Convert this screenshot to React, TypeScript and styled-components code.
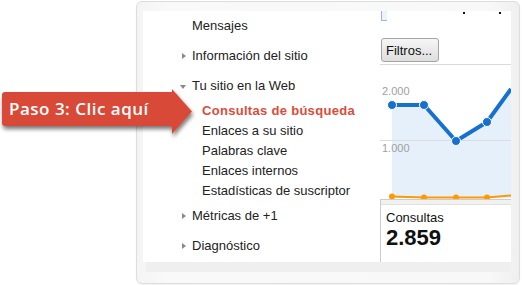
import styled, { createGlobalStyle } from "styled-components";

const GlobalStyle = createGlobalStyle`
  html, body {
    margin: 0;
    padding: 0;
    background: #fff;
  }
  body {
    font-family: "Liberation Sans", Arial, sans-serif;
  }
`;

const Page = styled.div`
  position: relative;
  width: 522px;
  height: 285px;
  overflow: hidden;
  padding-top: 1px;
  box-sizing: border-box;
`;

const Frame = styled.div`
  margin-left: 136px;
  width: 384px;
  height: 283px;
  box-sizing: border-box;
  border: 1px solid #dddddd;
  border-radius: 6px;
  background: linear-gradient(to right, #f4f4f4, #f9f9f9 8%, #f8f8f8 92%, #efefef);
  box-shadow: 0 1px 2px rgba(0, 0, 0, 0.06);
  padding: 9px 8px 0 6px;
  display: flex;
  flex-direction: column;
`;

const Inner = styled.div`
  height: 251px;
  background: #fff;
  display: grid;
  grid-template-columns: 237px 131px;
`;

const Strip = styled.div`
  height: 10px;
  margin-left: 3px;
  background: #efefef;
`;

const Nav = styled.ul`
  list-style: none;
  margin: 0;
  padding: 0 0 0 49px;
  font-size: 13px;
  color: #222;
`;

const Item = styled.li`
  position: relative;
  height: 30px;
  line-height: 30px;
  white-space: nowrap;
`;

const Arrow = styled.span<{ $open?: boolean }>`
  position: absolute;
  width: 0;
  height: 0;
  ${(p) =>
    p.$open
      ? `
    left: -12px;
    top: 14px;
    border-left: 3.5px solid transparent;
    border-right: 3.5px solid transparent;
    border-top: 4px solid #888;
  `
      : `
    left: -10px;
    top: 12px;
    border-top: 3.5px solid transparent;
    border-bottom: 3.5px solid transparent;
    border-left: 4px solid #888;
  `}
`;

const SubList = styled.ul`
  list-style: none;
  margin: 0;
  padding: 0 0 0 10px;
`;

const SubItem = styled.li<{ $active?: boolean }>`
  height: 20px;
  line-height: 20px;
  white-space: nowrap;
  color: ${(p) => (p.$active ? "#dd4b39" : "#222")};
  font-weight: ${(p) => (p.$active ? "bold" : "normal")};
  letter-spacing: ${(p) => (p.$active ? "0.3px" : "0")};
`;

const Side = styled.div`
  display: flex;
  flex-direction: column;
`;

const TopRow = styled.div`
  height: 10px;
  display: flex;
  align-items: flex-start;
`;

const SelectCorner = styled.div`
  width: 5px;
  height: 9px;
  margin-left: 1px;
  border-left: 1px solid #9fb2dc;
  border-bottom: 1px solid #9fb2dc;
  background: #eef2fb;
`;

const Dot = styled.div<{ $gap: number }>`
  width: 2px;
  height: 2px;
  margin-top: 1px;
  margin-left: ${(p) => p.$gap}px;
  background: #111;
`;

const ButtonRow = styled.div`
  height: 44px;
  box-sizing: border-box;
  padding: 17px 0 0 1px;
  border-bottom: 1px solid #dadada;
`;

const FilterButton = styled.button`
  width: 58px;
  height: 24px;
  padding: 0 0 0 4px;
  text-align: left;
  font-family: "Liberation Sans", Arial, sans-serif;
  font-size: 13px;
  color: #111;
  border: 1px solid #a4a4a4;
  border-radius: 3px;
  background: linear-gradient(#f6f6f6, #dedede);
`;

const Chart = styled.svg`
  display: block;
  width: 131px;
  height: 134px;
`;

const Stats = styled.div`
  flex: 1;
  border-left: 1px solid #cccccc;
  border-top: 1px solid #cccccc;
  padding: 0 0 0 5px;
  &::before {
    content: "";
    display: block;
    height: 4px;
    margin-left: -5px;
    background: #f1f1f1;
    border-bottom: 1px solid #e0e0e0;
  }
`;

const StatLabel = styled.div`
  margin-top: 5px;
  font-size: 13px;
  line-height: 16px;
  color: #111;
`;

const StatValue = styled.div`
  font-size: 22px;
  line-height: 24px;
  font-weight: bold;
  color: #111;
`;

const Callout = styled.div`
  position: absolute;
  left: 0;
  top: 86px;
  width: 196px;
  height: 54px;
`;

const CalloutShape = styled.svg`
  position: absolute;
  inset: 0;
  overflow: visible;
`;

const CalloutText = styled.span`
  position: absolute;
  left: 9px;
  top: 6px;
  font-family: "Open Sans", "Liberation Sans", sans-serif;
  font-weight: 600;
  font-size: 17px;
  letter-spacing: 0.5px;
  line-height: 34px;
  color: #fff;
  white-space: nowrap;
`;

const blue = [
  [12, 40],
  [44, 40],
  [76, 76],
  [107, 57],
];
const orange = [
  [12, 131.5],
  [44, 132.5],
  [76, 132.5],
  [107, 132.5],
];

const pts = (arr: number[][]) => arr.map((p) => p.join(",")).join(" ");

export default function App() {
  return (
    <Page>
      <GlobalStyle />
      <Frame>
        <Inner>
          <Nav>
            <Item>Mensajes</Item>
            <Item>
              <Arrow />
              Información del sitio
            </Item>
            <Item>
              <Arrow $open />
              Tu sitio en la Web
            </Item>
            <SubList>
              <SubItem $active>Consultas de búsqueda</SubItem>
              <SubItem>Enlaces a su sitio</SubItem>
              <SubItem>Palabras clave</SubItem>
              <SubItem>Enlaces internos</SubItem>
              <SubItem>Estadísticas de suscriptor</SubItem>
            </SubList>
            <Item>
              <Arrow />
              Métricas de +1
            </Item>
            <Item>
              <Arrow />
              Diagnóstico
            </Item>
          </Nav>
          <Side>
            <TopRow>
              <SelectCorner />
              <Dot $gap={76} />
              <Dot $gap={34} />
            </TopRow>
            <ButtonRow>
              <FilterButton>Filtros...</FilterButton>
            </ButtonRow>
            <Chart viewBox="0 0 131 134">
              <polygon
                points={`${pts(blue)} 131,24 131,133 12,133`}
                fill="#e5f0fa"
              />
              <line x1="0" y1="75.5" x2="131" y2="75.5" stroke="#d8dde2" strokeWidth="1" />
              <text x="2" y="30" fontSize="11" fill="#a0a0a0" fontFamily="Liberation Sans, Arial, sans-serif">
                2.000
              </text>
              <text x="2" y="87" fontSize="11" fill="#a0a0a0" fontFamily="Liberation Sans, Arial, sans-serif">
                1.000
              </text>
              <polyline
                points={`${pts(orange)} 131,130.5`}
                fill="none"
                stroke="#ff9900"
                strokeWidth="2"
              />
              {orange.map(([x, y]) => (
                <circle key={x} cx={x} cy={y} r="3" fill="#ff9900" />
              ))}
              <polyline
                points={`${pts(blue)} 131,24`}
                fill="none"
                stroke="#1570cf"
                strokeWidth="4"
                strokeLinejoin="round"
              />
              {blue.map(([x, y]) => (
                <circle key={x} cx={x} cy={y} r="4.5" fill="#1570cf" stroke="#fff" strokeWidth="1" />
              ))}
            </Chart>
            <Stats>
              <StatLabel>Consultas</StatLabel>
              <StatValue>2.859</StatValue>
            </Stats>
          </Side>
        </Inner>
        <Strip />
      </Frame>
      <Callout>
        <CalloutShape viewBox="0 0 196 54" width="196" height="54">
          <defs>
            <filter id="drop" x="-10%" y="-20%" width="120%" height="160%">
              <feGaussianBlur in="SourceAlpha" stdDeviation="2" />
              <feOffset dx="1" dy="3" />
              <feComponentTransfer>
                <feFuncA type="linear" slope="0.55" />
              </feComponentTransfer>
              <feMerge>
                <feMergeNode />
                <feMergeNode in="SourceGraphic" />
              </feMerge>
            </filter>
          </defs>
          <path
            d="M5 6 H172 V3 L192 25.5 L172 48 V40 H5 Q2 40 2 37 V9 Q2 6 5 6 Z"
            fill="#d84a38"
            filter="url(#drop)"
          />
        </CalloutShape>
        <CalloutText>Paso 3: Clic aquí</CalloutText>
      </Callout>
    </Page>
  );
}
